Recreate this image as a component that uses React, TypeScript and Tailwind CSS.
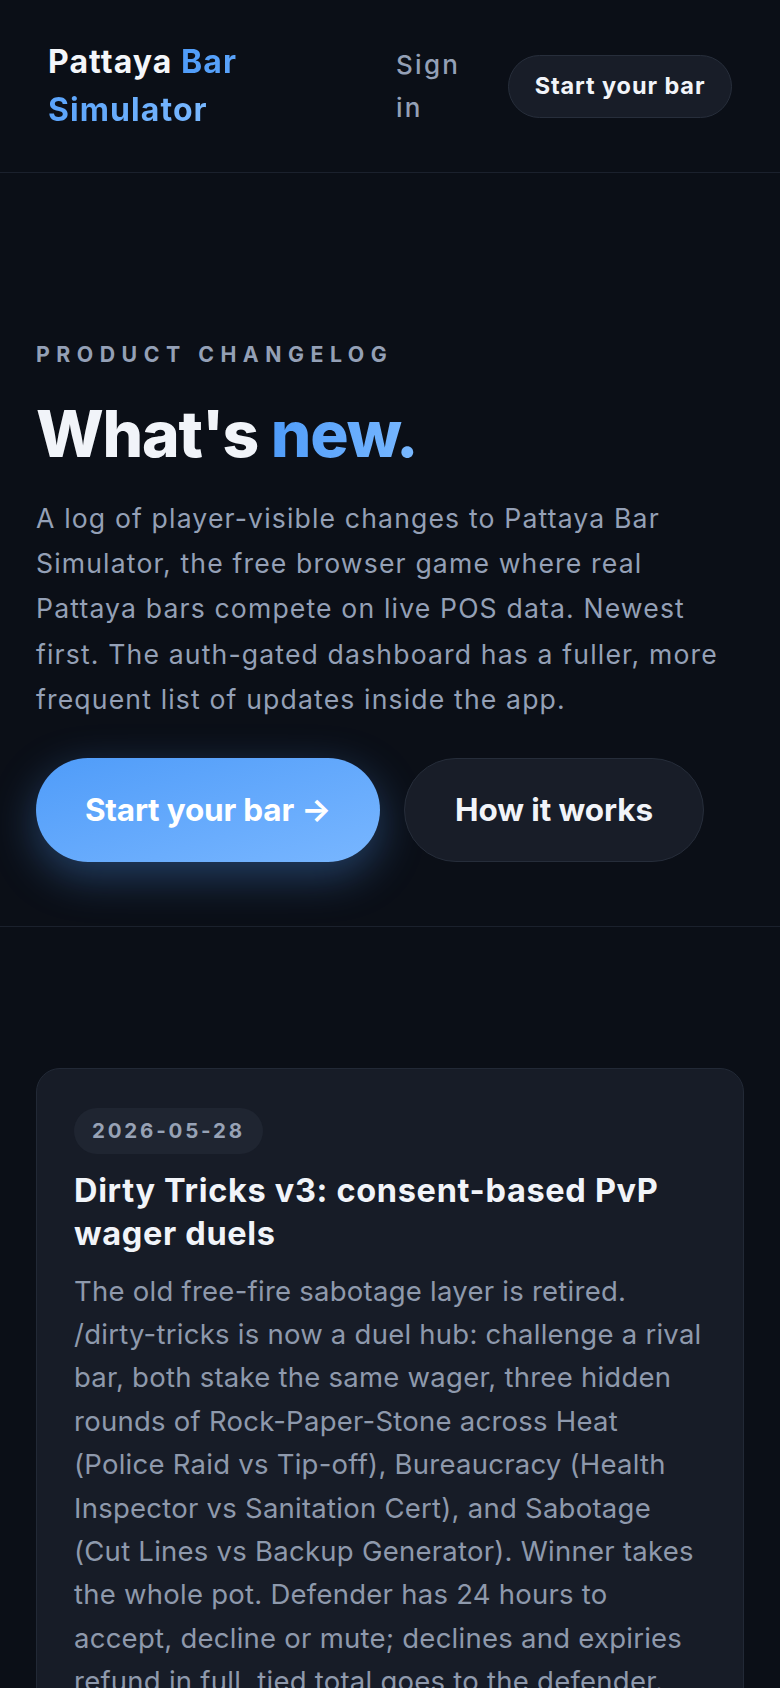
import React from "react";

export default function App() {
  return (
    <div className="min-h-screen bg-[#0b0f17] font-['Inter','Noto_Sans',sans-serif] antialiased">
      <header className="flex h-[173px] items-center justify-between border-b border-[#1b212d] px-[48px]">
        <div className="w-[215px] text-[32px] font-bold leading-[48px] tracking-[1.07px] text-[#f4f6fa]">
          Pattaya{" "}
          <span className="bg-gradient-to-r from-[#4f9cf9] to-[#79b8ff] bg-clip-text text-transparent">
            Bar Simulator
          </span>
        </div>
        <div className="flex items-center gap-[46px]">
          <a className="w-[66px] text-[26px] font-medium leading-[43px] tracking-[2.3px] text-[#94a0b6]">Sign in</a>
          <button className="h-[63px] w-[224px] rounded-full border border-[#272e3b] bg-[#181d28] text-[23.5px] font-bold tracking-[0.9px] text-[#f1f4f9]">
            Start your bar
          </button>
        </div>
      </header>

      <section className="border-b border-[#1b212d] px-[36px] pb-[64px] pt-[165px]">
        <div className="text-[21.3px] font-bold uppercase leading-[32px] tracking-[6.5px] text-[#94a0b6]">
          Product changelog
        </div>
        <h1 className="mt-[29px] text-[64px] font-extrabold leading-[70px] tracking-[-1.2px] text-[#f1f4f9]">
          What's{" "}
          <span className="bg-gradient-to-r from-[#4f9cf9] to-[#79b8ff] bg-clip-text text-transparent">new.</span>
        </h1>
        <p className="mt-[27px] whitespace-nowrap text-[26.6px] leading-[45.2px] tracking-[1.15px] text-[#94a0b6]">
          A log of player-visible changes to Pattaya Bar
          <br />
          Simulator, the free browser game where real
          <br />
          Pattaya bars compete on live POS data. Newest
          <br />
          first. The auth-gated dashboard has a fuller, more
          <br />
          frequent list of updates inside the app.
        </p>
        <div className="mt-[36px] flex items-center gap-[24px]">
          <button className="h-[104px] w-[344px] rounded-full bg-gradient-to-br from-[#4f9cf9] to-[#78b6ff] text-[31.5px] font-bold tracking-[-0.2px] text-white shadow-[0_14px_44px_rgba(79,156,249,0.35)]">
            Start your bar →
          </button>
          <button className="h-[104px] w-[300px] rounded-full border border-[#262d3a] bg-[#181d28] text-[31.5px] font-bold tracking-[-0.1px] text-[#f1f4f9]">
            How it works
          </button>
        </div>
      </section>

      <section className="px-[36px] pt-[141px] pb-[80px]">
        <article className="rounded-[24px] border border-[#222936] bg-[#171c27] px-[37px] pt-[39px] pb-[40px]">
          <span className="inline-flex h-[46px] items-center rounded-full bg-[#1f2531] px-[18px] text-[20.5px] font-bold tracking-[2.8px] text-[#97a2b5]">
            2026-05-28
          </span>
          <h2 className="mt-[15px] text-[32.5px] font-bold leading-[43.3px] tracking-[0.67px] text-[#f1f4f9]">
            Dirty Tricks v3: consent-based PvP wager duels
          </h2>
          <p className="mt-[14px] whitespace-nowrap text-[27.5px] leading-[43.4px] tracking-[0.25px] text-[#8e99ac]">
            The old free-fire sabotage layer is retired.
            <br />
            /dirty-tricks is now a duel hub: challenge a rival
            <br />
            bar, both stake the same wager, three hidden
            <br />
            rounds of Rock-Paper-Stone across Heat
            <br />
            (Police Raid vs Tip-off), Bureaucracy (Health
            <br />
            Inspector vs Sanitation Cert), and Sabotage
            <br />
            (Cut Lines vs Backup Generator). Winner takes
            <br />
            the whole pot. Defender has 24 hours to
            <br />
            accept, decline or mute; declines and expiries
            <br />
            refund in full, tied total goes to the defender.
          </p>
        </article>
      </section>
    </div>
  );
}
